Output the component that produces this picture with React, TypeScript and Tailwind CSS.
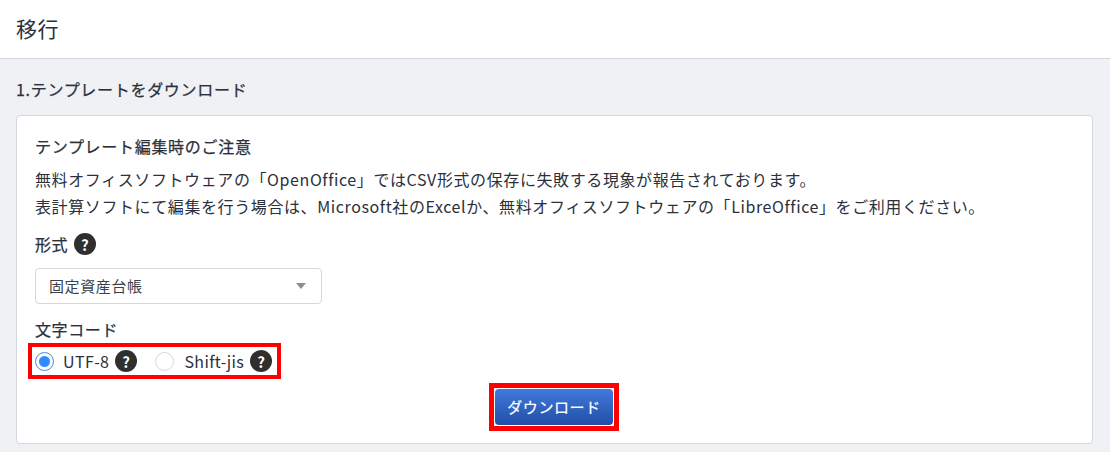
function Help() {
  return (
    <span className="inline-flex h-[22px] w-[22px] shrink-0 items-center justify-center rounded-full bg-[#2f2f2f] text-[15px] leading-none font-bold text-white">
      ?
    </span>
  );
}

export default function App() {
  return (
    <div className="h-[452px] w-[1110px] overflow-hidden bg-[#eff1f5] font-['Noto_Sans_CJK_JP','Liberation_Sans',sans-serif] text-[16px] tracking-[0.6px] text-[#2b303b]">
      <header className="flex h-[59px] items-center border-b border-[#d6d7dc] bg-white pl-4 text-[21px]">移行</header>
      <h2 className="flex h-[56px] items-center pl-4 pt-1 text-[16px] leading-6 font-normal tracking-[0.7px] [-webkit-text-stroke:0.25px]">1.テンプレートをダウンロード</h2>
      <section className="ml-4 mr-[17px] h-[329px] rounded border border-[#d6d7dc] bg-white px-[18px] pt-[18px]">
        <h3 className="text-[16px] leading-6 font-normal tracking-[0.7px] [-webkit-text-stroke:0.25px]">テンプレート編集時のご注意</h3>
        <p className="mt-2 leading-[27px]">無料オフィスソフトウェアの「OpenOffice」ではCSV形式の保存に失敗する現象が報告されております。</p>
        <p className="leading-[27px]">表計算ソフトにて編集を行う場合は、Microsoft社のExcelか、無料オフィスソフトウェアの「LibreOffice」をご利用ください。</p>
        <div className="mt-3 flex h-6 items-center gap-[6px]">
          <span className="[-webkit-text-stroke:0.25px]">形式</span> <Help />
        </div>
        <div className="mt-3 flex h-9 w-[287px] items-center justify-between rounded border border-[#d6d7dc] pl-[13px] pr-[15px] text-[15px] text-[#3a3f4b]">
          固定資産台帳
          <span className="h-0 w-0 border-x-[5px] border-t-[6px] border-x-transparent border-t-[#8a8d99]" />
        </div>
        <div className="mt-[13px] h-6 leading-6 [-webkit-text-stroke:0.25px]">文字コード</div>
        <div className="-ml-[7px] mt-[2px] flex h-[36px] w-[253px] items-center border-4 border-[#ff0000] pl-[3px] tracking-[0.4px]">
          <span className="flex h-[19px] w-[19px] items-center justify-center rounded-full border border-[#3b8cf5]">
            <span className="h-[11px] w-[11px] rounded-full bg-[#2f8bff]" />
          </span>
          <span className="ml-[9px] mr-[6px]">UTF-8</span>
          <Help />
          <span className="ml-[18px] h-[19px] w-[19px] rounded-full border border-[#d6d7dc]" />
          <span className="ml-[10px] mr-[6px]">Shift-jis</span>
          <Help />
        </div>
        <div className="mt-1 flex justify-center pr-[1px]">
          <button className="box-border h-[48px] w-[130px] border-[5px] border-[#ff0000] bg-white p-[1px]">
            <span className="flex h-full w-full items-center justify-center rounded bg-gradient-to-b from-[#4379dc] to-[#1f4fa8] text-[15px] font-normal text-white [-webkit-text-stroke:0.2px]">
              ダウンロード
            </span>
          </button>
        </div>
      </section>
    </div>
  );
}
